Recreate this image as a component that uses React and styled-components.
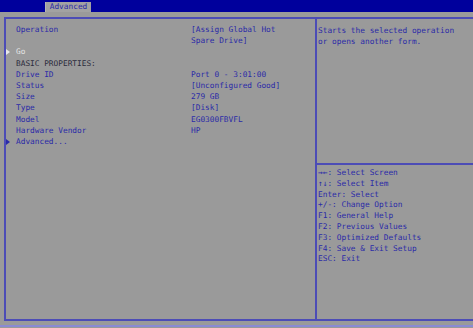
import React from "react"
import styled, { createGlobalStyle } from "styled-components"

const BLUE = "#2a2aa8"
const LINE = "#4c4cb6"
const GRAY = "#9a9a9a"

const Global = createGlobalStyle`
  html, body {
    margin: 0;
    padding: 0;
    background: ${GRAY};
    overflow: hidden;
  }
  body {
    font-family: "DejaVu Sans Mono", "Liberation Mono", monospace;
    font-size: 7.8px;
    color: ${BLUE};
  }
`

const Screen = styled.div`
  width: 473px;
  height: 328px;
  display: flex;
  flex-direction: column;
  background: ${GRAY};
`

const TopBar = styled.div`
  height: 12px;
  background: #00009c;
  padding-left: 45px;
  display: flex;
  align-items: flex-end;
`

const Tab = styled.div`
  width: 46px;
  height: 10px;
  background: #a2a2a2;
  border-left: 1px solid #b4b4b4;
  color: ${BLUE};
  font-size: 7.8px;
  line-height: 10px;
  text-align: center;
  box-sizing: border-box;
`

const Frame = styled.div`
  margin: 5px 0 0 4px;
  height: 304px;
  box-sizing: border-box;
  border: 2px solid ${LINE};
  border-right: none;
  display: grid;
  grid-template-columns: 311px 1fr;
`

const LeftPane = styled.div`
  border-right: 2px solid ${LINE};
  padding-top: 5px;
`

const Row = styled.div`
  display: grid;
  grid-template-columns: 10px 175px 1fr;
  line-height: 11.2px;
  white-space: pre;
`

const Marker = styled.span`
  display: flex;
  align-items: center;
  &::before {
    content: "";
    display: ${(p) => (p.$on ? "block" : "none")};
    width: 0;
    height: 0;
    border-left: 4px solid ${(p) => p.$color || BLUE};
    border-top: 3px solid transparent;
    border-bottom: 3px solid transparent;
  }
`

const Label = styled.span`
  color: ${(p) => p.$color || BLUE};
`

const Value = styled.span`
  color: ${BLUE};
`

const RightPane = styled.div`
  display: grid;
  grid-template-rows: 144px 1fr;
`

const HelpText = styled.div`
  padding: 6px 0 0 1px;
  line-height: 11px;
  white-space: pre;
`

const KeyHelp = styled.div`
  border-top: 2px solid ${LINE};
  padding: 3px 0 0 1px;
  line-height: 10.8px;
  white-space: pre;
`

const BottomLine = styled.div`
  margin-top: 4px;
  border-top: 2px solid #8a8ad4;
`

const rows = [
  { label: "Operation", value: "[Assign Global Hot" },
  { label: "", value: "Spare Drive]" },
  { label: "Go", marker: "#e8e8e8", color: "#e4e4e4" },
  { label: "BASIC PROPERTIES:", color: "#2c2c3c" },
  { label: "Drive ID", value: "Port 0 - 3:01:00" },
  { label: "Status", value: "[Unconfigured Good]" },
  { label: "Size", value: "279 GB" },
  { label: "Type", value: "[Disk]" },
  { label: "Model", value: "EG0300FBVFL" },
  { label: "Hardware Vendor", value: "HP" },
  { label: "Advanced...", marker: BLUE },
]

const keys = [
  "\u2192\u2190: Select Screen",
  "\u2191\u2193: Select Item",
  "Enter: Select",
  "+/-: Change Option",
  "F1: General Help",
  "F2: Previous Values",
  "F3: Optimized Defaults",
  "F4: Save & Exit Setup",
  "ESC: Exit",
]

export default function App() {
  return (
    <Screen>
      <Global />
      <TopBar>
        <Tab>Advanced</Tab>
      </TopBar>
      <Frame>
        <LeftPane>
          {rows.map((r, i) => (
            <Row key={i}>
              <Marker $on={!!r.marker} $color={r.marker} />
              <Label $color={r.color}>{r.label}</Label>
              <Value>{r.value || ""}</Value>
            </Row>
          ))}
        </LeftPane>
        <RightPane>
          <HelpText>
            {"Starts the selected operation\nor opens another form."}
          </HelpText>
          <KeyHelp>{keys.join("\n")}</KeyHelp>
        </RightPane>
      </Frame>
      <BottomLine />
    </Screen>
  )
}
